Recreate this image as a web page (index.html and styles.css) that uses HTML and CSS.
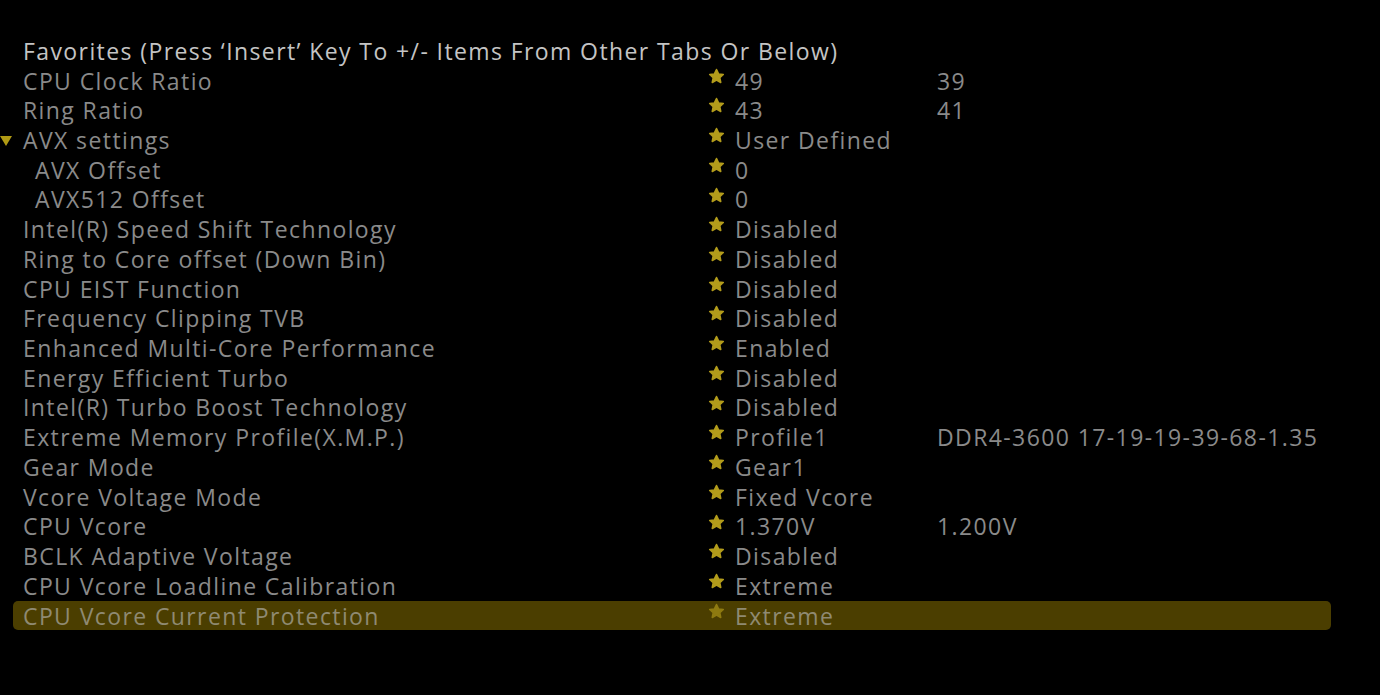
FILE: index.html
```html
<!DOCTYPE html>
<html>
<head>
<meta charset="utf-8">
<link rel="stylesheet" href="styles.css">
</head>
<body>
<svg width="0" height="0" class="defs">
  <defs>
    <symbol id="star" viewBox="0 0 24 24">
      <path d="M12 2.2 L14.9 8.4 L21.6 9.1 L16.6 13.7 L18 20.4 L12 17 L6 20.4 L7.4 13.7 L2.4 9.1 L9.1 8.4 Z" fill="currentColor" stroke="currentColor" stroke-width="2.2" stroke-linejoin="round"/>
    </symbol>
  </defs>
</svg>
<div class="list">
  <div class="row head"><span class="label">Favorites (Press ‘Insert’ Key To +/- Items From Other Tabs Or Below)</span></div>
  <div class="row"><span class="label">CPU Clock Ratio</span><span class="star"><svg><use href="#star"/></svg></span><span class="val">49</span><span class="extra">39</span></div>
  <div class="row"><span class="label">Ring Ratio</span><span class="star"><svg><use href="#star"/></svg></span><span class="val">43</span><span class="extra">41</span></div>
  <div class="row"><span class="tri"></span><span class="label">AVX settings</span><span class="star"><svg><use href="#star"/></svg></span><span class="val">User Defined</span></div>
  <div class="row"><span class="label sub">AVX Offset</span><span class="star"><svg><use href="#star"/></svg></span><span class="val">0</span></div>
  <div class="row"><span class="label sub">AVX512 Offset</span><span class="star"><svg><use href="#star"/></svg></span><span class="val">0</span></div>
  <div class="row"><span class="label">Intel(R) Speed Shift Technology</span><span class="star"><svg><use href="#star"/></svg></span><span class="val">Disabled</span></div>
  <div class="row"><span class="label">Ring to Core offset (Down Bin)</span><span class="star"><svg><use href="#star"/></svg></span><span class="val">Disabled</span></div>
  <div class="row"><span class="label">CPU EIST Function</span><span class="star"><svg><use href="#star"/></svg></span><span class="val">Disabled</span></div>
  <div class="row"><span class="label">Frequency Clipping TVB</span><span class="star"><svg><use href="#star"/></svg></span><span class="val">Disabled</span></div>
  <div class="row"><span class="label">Enhanced Multi-Core Performance</span><span class="star"><svg><use href="#star"/></svg></span><span class="val">Enabled</span></div>
  <div class="row"><span class="label">Energy Efficient Turbo</span><span class="star"><svg><use href="#star"/></svg></span><span class="val">Disabled</span></div>
  <div class="row"><span class="label">Intel(R) Turbo Boost Technology</span><span class="star"><svg><use href="#star"/></svg></span><span class="val">Disabled</span></div>
  <div class="row"><span class="label">Extreme Memory Profile(X.M.P.)</span><span class="star"><svg><use href="#star"/></svg></span><span class="val">Profile1</span><span class="extra">DDR4-3600 17-19-19-39-68-1.35</span></div>
  <div class="row"><span class="label">Gear Mode</span><span class="star"><svg><use href="#star"/></svg></span><span class="val">Gear1</span></div>
  <div class="row"><span class="label">Vcore Voltage Mode</span><span class="star"><svg><use href="#star"/></svg></span><span class="val">Fixed Vcore</span></div>
  <div class="row"><span class="label">CPU Vcore</span><span class="star"><svg><use href="#star"/></svg></span><span class="val">1.370V</span><span class="extra">1.200V</span></div>
  <div class="row"><span class="label">BCLK Adaptive Voltage</span><span class="star"><svg><use href="#star"/></svg></span><span class="val">Disabled</span></div>
  <div class="row"><span class="label">CPU Vcore Loadline Calibration</span><span class="star"><svg><use href="#star"/></svg></span><span class="val">Extreme</span></div>
  <div class="row sel"><span class="label">CPU Vcore Current Protection</span><span class="star"><svg><use href="#star"/></svg></span><span class="val">Extreme</span></div>
</div>
</body>
</html>
```
FILE: styles.css
```css
html, body {
  margin: 0;
  padding: 0;
  background: #000;
  width: 1380px;
  height: 695px;
  overflow: hidden;
}
.defs { position: absolute; }
.list {
  padding-top: 36px;
  font-family: "Open Sans", "DejaVu Sans", sans-serif;
  font-size: 23px;
  letter-spacing: 1.4px;
  color: #8a8a8a;
}
.row {
  position: relative;
  display: flex;
  align-items: center;
  height: 29.72px;
  width: 1318px;
  margin-left: 13px;
  white-space: nowrap;
}
.row.head { color: #c4c4c4; }
.label {
  box-sizing: border-box;
  width: 695px;
  padding-left: 10px;
  flex: none;
}
.label.sub { padding-left: 22px; }
.head .label { width: auto; }
.tri {
  position: absolute;
  left: -13px;
  top: 11px;
  width: 0;
  height: 0;
  border-left: 6px solid transparent;
  border-right: 6px solid transparent;
  border-top: 10px solid #b09a14;
}
.star {
  width: 27px;
  flex: none;
  align-self: flex-start;
  padding-top: 2px;
  box-sizing: border-box;
  color: #b39c1b;
  height: 100%;
}
.star svg { width: 17px; height: 17px; display: block; }
.val { width: 202px; flex: none; }
.extra { flex: none; }
.sel {
  background: #4b3e00;
  border-radius: 5px;
  color: #8f8a72;
}
.sel .star { color: #8e7a10; }
```
